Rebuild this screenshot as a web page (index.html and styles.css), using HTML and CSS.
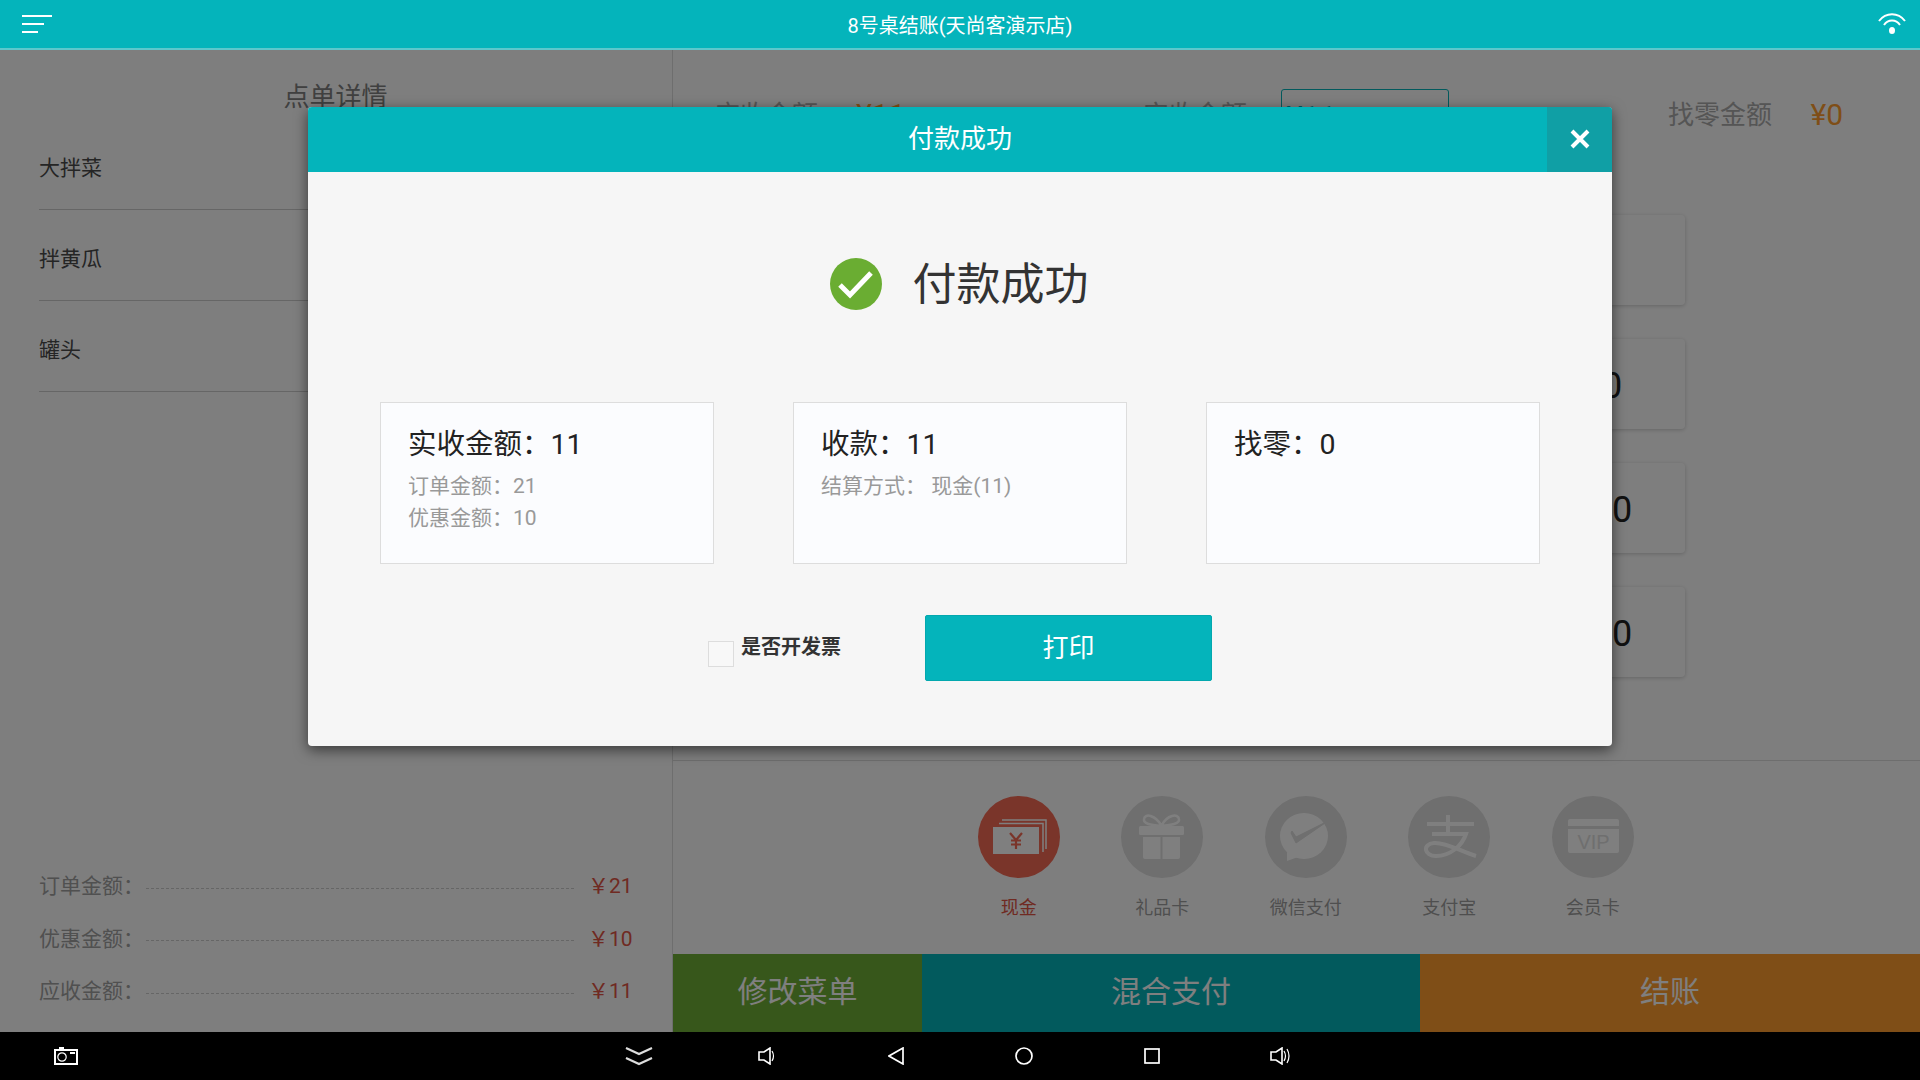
FILE: index.html
```html
<!DOCTYPE html>
<html>
<head>
    <meta charset="UTF-8">
    <title>8号桌结账</title>
    <link rel="stylesheet" href="styles.css">
</head>
<body>
    <header class="topbar">
        <div class="menu-btn"><i class="l1"></i><i class="l2"></i><i class="l3"></i></div>
        <div class="top-title">8号桌结账(天尚客演示店)</div>
        <svg class="wifi" width="28" height="22" viewBox="0 0 28 22" fill="none" stroke="#fff" stroke-width="2">
            <path d="M1 8 C8 -1 20 -1 27 8"/>
            <path d="M6 12 C10 6 18 6 22 12"/>
            <ellipse cx="14" cy="17.500" rx="3" ry="3.500" fill="#fff" stroke="none"/>
        </svg>
    </header>

    <main class="page">
        <section class="order">
            <h2 class="order-title">点单详情</h2>
            <ul class="dish-list">
                <li>大拌菜</li>
                <li>拌黄瓜</li>
                <li>罐头</li>
            </ul>
            <div class="totals">
                <div class="total-row"><span>订单金额：</span><i></i><b>￥21</b></div>
                <div class="total-row"><span>优惠金额：</span><i></i><b>￥10</b></div>
                <div class="total-row"><span>应收金额：</span><i></i><b>￥11</b></div>
            </div>
        </section>

        <section class="pay">
            <div class="pay-head">
                <span class="ph-due">应收金额</span>
                <span class="ph-due-val">¥11</span>
                <span class="ph-real">实收金额</span>
                <span class="ph-input">¥11</span>
                <span class="ph-change">找零金额</span>
                <span class="ph-change-val">¥0</span>
            </div>
            <div class="keypad">
                <div class="key"></div>
                <div class="key">50</div>
                <div class="key">100</div>
                <div class="key">100</div>
            </div>
            <div class="methods">
                <div class="method active">
                    <svg class="method-icon" width="82" height="82" viewBox="0 0 82 82">
                        <circle cx="41" cy="41" r="41" fill="#f56a55"/>
                        <path d="M24 24H68V53M21 27.500H65V56" fill="none" stroke="#fff" stroke-width="1.500"/>
                        <rect x="15" y="31" width="46" height="27" fill="#fff"/>
                        <path d="M32 37L38 44L44 37M38 44V53M33 44.500H43M33 48.500H43" fill="none" stroke="#f56a55" stroke-width="2.200"/>
                    </svg>
                    <span>现金</span>
                </div>
                <div class="method">
                    <svg class="method-icon" width="82" height="82" viewBox="0 0 82 82">
                        <circle cx="41" cy="41" r="41" fill="#dedede"/>
                        <path d="M40 29C34 19 24 17 23 23C22 28 30 29 40 30C50 29 59 28 58 23C57 17 46 19 41 29" fill="none" stroke="#fff" stroke-width="2.500"/>
                        <rect x="18" y="30" width="45" height="9" rx="1.500" fill="#fff"/>
                        <path d="M22 41H39.500V63H24Q22 63 22 61ZM41.500 41H59V61Q59 63 57 63H41.500Z" fill="#fff"/>
                    </svg>
                    <span>礼品卡</span>
                </div>
                <div class="method">
                    <svg class="method-icon" width="82" height="82" viewBox="0 0 82 82">
                        <circle cx="41" cy="41" r="41" fill="#dedede"/>
                        <ellipse cx="39" cy="40" rx="24" ry="23" fill="#fff"/>
                        <path d="M22 56L22 65L33 61Z" fill="#fff"/>
                        <path d="M26 37L31 47L63 25L31 41L27 35Z" fill="#dedede" stroke="#dedede" stroke-width="1"/>
                    </svg>
                    <span>微信支付</span>
                </div>
                <div class="method">
                    <svg class="method-icon" width="82" height="82" viewBox="0 0 82 82">
                        <circle cx="41" cy="41" r="41" fill="#dedede"/>
                        <path d="M19 28H66M40 19V37M24 38H58C54 50 42 60 28 60C16 60 14 48 26 47C38 46 54 56 68 60" fill="none" stroke="#fff" stroke-width="4"/>
                    </svg>
                    <span>支付宝</span>
                </div>
                <div class="method">
                    <svg class="method-icon" width="82" height="82" viewBox="0 0 82 82">
                        <circle cx="41" cy="41" r="41" fill="#dedede"/>
                        <path d="M16 30V25Q16 23 18 23H65Q67 23 67 25V30ZM16 33H67V55Q67 57 65 57H18Q16 57 16 55Z" fill="#fff"/>
                        <text x="41.500" y="53" text-anchor="middle" class="vip-text">VIP</text>
                    </svg>
                    <span>会员卡</span>
                </div>
            </div>
            <div class="actions">
                <div class="act act-green">修改菜单</div>
                <div class="act act-teal">混合支付</div>
                <div class="act act-orange">结账</div>
            </div>
        </section>

        <div class="mask"></div>

        <div class="dialog">
            <div class="dialog-head">
                <span class="dialog-title">付款成功</span>
                <span class="dialog-close">
                    <svg width="20" height="20" viewBox="0 0 20 20" stroke="#fff" stroke-width="4"><path d="M2 2L18 18M18 2L2 18"/></svg>
                </span>
            </div>
            <div class="dialog-body">
                <div class="result">
                    <svg width="52" height="52" viewBox="0 0 52 52">
                        <circle cx="26" cy="26" r="26" fill="#6aad32"/>
                        <path d="M10 27L20 37L41 15" fill="none" stroke="#fff" stroke-width="5"/>
                    </svg>
                    <span>付款成功</span>
                </div>
                <div class="cards">
                    <div class="card">
                        <div class="card-main">实收金额：11</div>
                        <div class="card-sub">订单金额：21</div>
                        <div class="card-sub">优惠金额：10</div>
                    </div>
                    <div class="card">
                        <div class="card-main">收款：11</div>
                        <div class="card-sub">结算方式：&nbsp;现金(11)</div>
                    </div>
                    <div class="card">
                        <div class="card-main">找零：0</div>
                    </div>
                </div>
                <div class="print-row">
                    <label class="invoice"><i class="check"></i><span>是否开发票</span></label>
                    <button class="print-btn">打印</button>
                </div>
            </div>
        </div>
    </main>

    <footer class="navbar">
        <svg width="24" height="18" viewBox="0 0 24 18" fill="none" stroke="#fff">
            <path d="M5 1H10" stroke-width="2"/>
            <rect x="1" y="3" width="22" height="14" stroke-width="2"/>
            <circle cx="8" cy="10" r="4.200" stroke-width="1.200"/>
            <path d="M16 6H21" stroke-width="2"/>
        </svg>
        <svg width="28" height="19" viewBox="0 0 28 19" fill="none" stroke="#ddd" stroke-width="2.200">
            <path d="M1 1L14 7L27 1M1 11L14 17L27 11"/>
        </svg>
        <svg width="20" height="18" viewBox="0 0 20 18" fill="none" stroke="#fff" stroke-width="1.600">
            <path d="M1 5H6L12 1V17L6 13H1Z"/>
            <path d="M14 4Q17 9 14 14" stroke-width="1.200"/>
        </svg>
        <svg width="17" height="18" viewBox="0 0 17 18" fill="none" stroke="#fff" stroke-width="1.700">
            <path d="M15 1V17L1 9Z"/>
        </svg>
        <svg width="18" height="18" viewBox="0 0 18 18" fill="none" stroke="#fff" stroke-width="1.700">
            <circle cx="9" cy="9" r="8"/>
        </svg>
        <svg width="16" height="16" viewBox="0 0 16 16" fill="none" stroke="#fff" stroke-width="1.700">
            <rect x="1" y="1" width="14" height="14"/>
        </svg>
        <svg width="21" height="18" viewBox="0 0 21 18" fill="none" stroke="#fff" stroke-width="1.600">
            <path d="M1 5H6L12 1V17L6 13H1Z"/>
            <path d="M14 4Q17 9 14 14M17 2Q21 9 17 16" stroke-width="1.200"/>
        </svg>
    </footer>
</body>
</html>
```

FILE: styles.css
```css
*{
    box-sizing: border-box;
}
html,body{
    margin: 0;
    height: 100%;
}
body{
    width: 1920px;
    height: 1080px;
    overflow: hidden;
    display: flex;
    flex-direction: column;
    background: #fdfdfd;
    font-family: Roboto, "Noto Sans CJK SC", sans-serif;
    color: #333;
}

/* 顶部 */
.topbar{
    height: 50px;
    flex: none;
    display: flex;
    align-items: center;
    justify-content: center;
    position: relative;
    background: #04b4bb;
    border-bottom: 2px solid #5cc8cc;
}
.top-title{
    font-size: 20px;
    color: #fff;
}
.menu-btn{
    position: absolute;
    left: 22px;
    top: 15px;
    width: 30px;
}
.menu-btn i{
    display: block;
    height: 2px;
    margin-bottom: 6px;
    background: #fff;
}
.menu-btn .l1{ width: 30px; }
.menu-btn .l2{ width: 22px; }
.menu-btn .l3{ width: 16px; }
.wifi{
    position: absolute;
    left: 1878px;
    top: 13px;
}

/* 主体 */
.page{
    flex: 1;
    display: flex;
    position: relative;
    min-height: 0;
}
.order{
    width: 673px;
    flex: none;
    display: flex;
    flex-direction: column;
    padding: 0 35px 0 39px;
    border-right: 1px solid #ddd;
}
.order-title{
    margin: 27px 0 0;
    height: 42px;
    line-height: 40px;
    padding-right: 5px;
    font-size: 26px;
    font-weight: 400;
    text-align: center;
    color: #808080;
}
.dish-list{
    list-style: none;
    margin: 0;
    padding: 0;
}
.dish-list li{
    height: 91px;
    line-height: 91px;
    padding-top: 4px;
    font-size: 21px;
    color: #4a4a4a;
    border-bottom: 1px solid #ccc;
}
.totals{
    margin-top: auto;
    padding-bottom: 14px;
}
.total-row{
    display: flex;
    align-items: center;
    height: 52.500px;
    font-size: 21px;
    color: #a0a0a0;
}
.total-row span{
    padding-bottom: 5px;
}
.total-row i{
    flex: 1;
    margin: 3px 14px 0 2px;
    border-top: 1px dashed #ccc;
}
.total-row b{
    width: 49px;
    padding-bottom: 5px;
    font-weight: 400;
    color: #e05545;
    white-space: nowrap;
}

.pay{
    flex: 1;
    display: flex;
    flex-direction: column;
}
.pay-head{
    display: flex;
    align-items: center;
    height: 50px;
    margin-top: 39px;
    padding-left: 41px;
    font-size: 26px;
    color: #aaa;
}
.ph-due,.ph-real,.ph-change{
    padding-bottom: 4px;
}
.ph-due-val{
    margin-left: 38px;
    font-size: 30px;
    color: #ff9d2e;
}
.ph-real{
    margin-left: 237.500px;
}
.ph-input{
    width: 168px;
    height: 50px;
    margin-left: 33.500px;
    padding: 10px 5px;
    line-height: 34px;
    font-size: 30px;
    color: #04b4bb;
    border: 1px solid #04b4bb;
    border-radius: 3px;
}
.ph-change{
    margin-left: 219.500px;
}
.ph-change-val{
    margin-left: 38.500px;
    font-size: 30px;
    color: #ff9d2e;
}
.keypad{
    display: flex;
    flex-direction: column;
    align-items: flex-end;
    gap: 34px;
    margin-top: 76px;
    padding-right: 235px;
}
.key{
    width: 180px;
    height: 90px;
    line-height: 95px;
    padding-left: 14px;
    text-align: center;
    font-size: 36px;
    color: #222;
    border-radius: 4px;
    box-shadow: 0 1px 4px rgba(0,0,0,.2);
}
.methods{
    margin-top: auto;
    height: 194px;
    display: flex;
    padding: 35px 0 0 274px;
    border-top: 1px solid #ddd;
}
.method{
    width: 143.500px;
    display: flex;
    flex-direction: column;
    align-items: center;
    font-size: 18px;
    color: #9e9e9e;
}
.method span{
    margin-top: 17px;
    line-height: 26px;
}
.method.active{
    color: #e05545;
}
.method-icon{
    display: block;
}
.vip-text{
    font-family: "Liberation Sans", sans-serif;
    font-size: 20px;
    fill: #dedede;
}
.actions{
    height: 78px;
    flex: none;
    display: flex;
    font-size: 30px;
    color: #fff;
}
.act{
    display: flex;
    align-items: center;
    justify-content: center;
    padding-bottom: 9px;
}
.act-green{ width: 249px; background: #6eae36; }
.act-teal{ width: 498px; background: #04b4bb; }
.act-orange{ flex: 1; background: #fe9c2e; }

/* 遮罩和弹窗 */
.mask{
    position: absolute;
    left: 0;
    top: 0;
    width: 100%;
    height: 100%;
    background: rgba(0,0,0,.5);
}
.dialog{
    position: absolute;
    left: 308px;
    top: 57px;
    width: 1304px;
    height: 639px;
    background: #f6f6f6;
    border-radius: 4px;
    box-shadow: 0 4px 14px rgba(0,0,0,.55);
}
.dialog-head{
    height: 65px;
    display: flex;
    align-items: center;
    justify-content: center;
    position: relative;
    background: #04b4bb;
    border-radius: 4px 4px 0 0;
}
.dialog-title{
    padding-bottom: 7px;
    font-size: 26px;
    color: #fff;
}
.dialog-close{
    position: absolute;
    right: 0;
    top: 0;
    width: 65px;
    height: 65px;
    display: flex;
    align-items: center;
    justify-content: center;
    padding-bottom: 2px;
    background: #109fa5;
    border-top-right-radius: 4px;
}
.dialog-body{
    padding: 86px 72px 0;
}
.result{
    display: flex;
    align-items: center;
    justify-content: center;
    gap: 31px;
    height: 52px;
    padding-right: 2px;
    font-size: 44px;
}
.result span{
    padding-bottom: 7px;
}
.cards{
    display: grid;
    grid-template-columns: repeat(3,1fr);
    gap: 79px;
    margin-top: 92px;
}
.card{
    height: 162px;
    padding: 22px 27px 0;
    background: #fbfcfe;
    border: 1px solid #ddd;
}
.card-main{
    height: 40px;
    line-height: 40px;
    margin-bottom: 5px;
    font-size: 28.500px;
    color: #222;
}
.card-sub{
    height: 32px;
    line-height: 32px;
    font-size: 21px;
    color: #999;
}
.print-row{
    display: flex;
    align-items: flex-start;
    margin-top: 51px;
    padding-left: 328px;
}
.invoice{
    display: flex;
    width: 217px;
    padding-top: 18px;
    font-size: 20px;
    font-weight: 700;
    line-height: 28px;
}
.check{
    width: 26px;
    height: 26px;
    margin: 8px 7px 0 0;
    border: 1px solid #ddd;
    background: #f8f8f8;
}
.print-btn{
    width: 287px;
    height: 66px;
    padding: 0 0 6px;
    font-family: inherit;
    font-size: 26px;
    color: #fff;
    background: #04b4bb;
    border: 1px solid #03a8ae;
    border-radius: 2px;
}

/* 底部导航 */
.navbar{
    height: 48px;
    flex: none;
    display: grid;
    grid-template-columns: 571px 133px 130px 127px 129px 126px 1fr;
    align-items: center;
    padding-left: 54px;
    background: #000;
}
```
